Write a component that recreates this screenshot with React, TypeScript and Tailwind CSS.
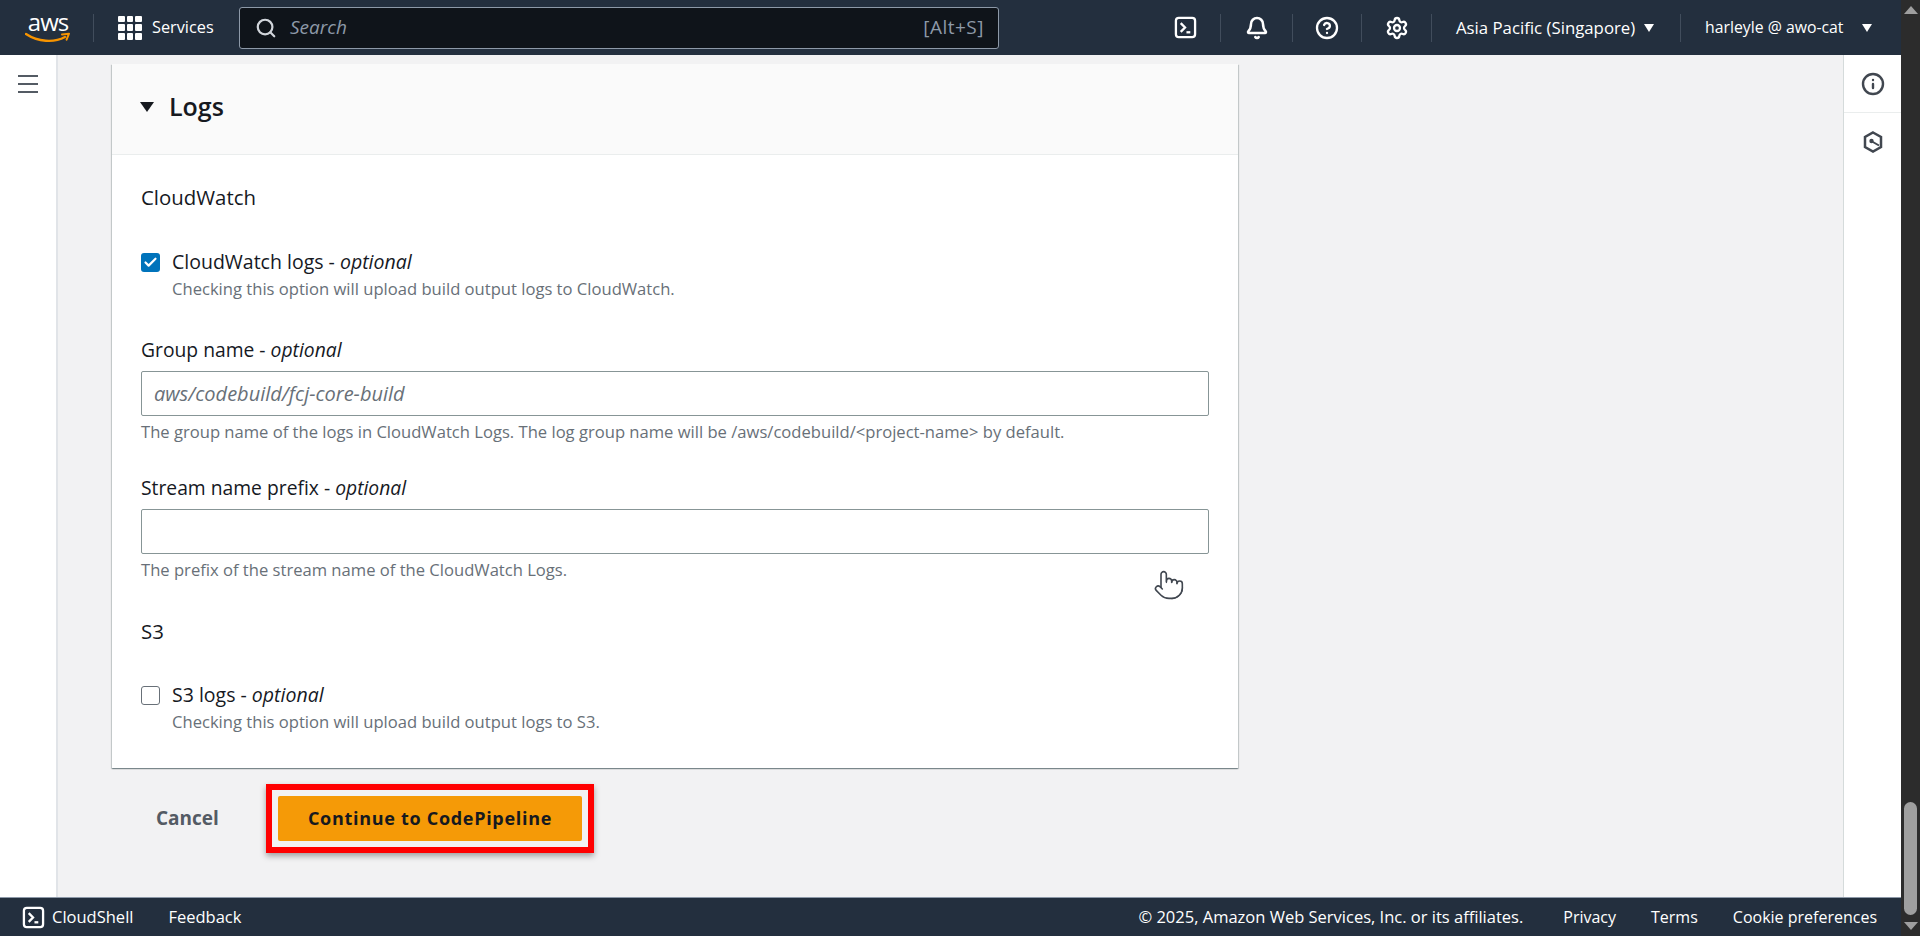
import { Bell, Check, CircleHelp, Info, Pointer, Search, Settings } from "lucide-react";

const FONT = "font-['Open_Sans','Noto_Sans',sans-serif]";

function ShellIcon({ className }: { className?: string }) {
  return (
    <svg viewBox="0 0 24 24" className={className} fill="none" stroke="currentColor">
      <rect x="2" y="2" width="20" height="20" rx="3" strokeWidth="2.4" />
      <path d="M7 7.5 11.5 12 7 16.5" strokeWidth="2.4" />
      <path d="M13 17h4" strokeWidth="2.4" />
    </svg>
  );
}

function Caret({ className }: { className?: string }) {
  return <span className={`inline-block h-0 w-0 border-x-[5px] border-t-[8px] border-x-transparent border-t-white ${className ?? ""}`} />;
}

function AwsLogo() {
  return (
    <div className="relative flex h-[40px] w-[46px] flex-col items-center">
      <span className="text-[24px] leading-[28px] tracking-[-1px] text-white">aws</span>
      <svg viewBox="0 0 46 12" className="absolute left-0 top-[24px] h-[12px] w-[46px]" fill="none">
        <path d="M1 2c12 8 28 9 39 3" stroke="#f79400" strokeWidth="2.4" strokeLinecap="round" />
        <path d="M37 2.5l7-.8-2.4 6" stroke="#f79400" strokeWidth="2" strokeLinecap="round" strokeLinejoin="round" />
      </svg>
    </div>
  );
}

function Divider() {
  return <span className="block h-[28px] w-px bg-[#414d5c]" />;
}

function TopBar() {
  return (
    <header className="flex h-[55px] shrink-0 items-center bg-[#232f3e] text-white shadow-[0_1px_0_#8d99a8]">
      <div className="ml-[25px] flex w-[46px] justify-center">
        <AwsLogo />
      </div>
      <span className="ml-[22px]"><Divider /></span>
      <div className="ml-[24px] grid h-[24px] w-[24px] grid-cols-3 gap-[2px]">
        {Array.from({ length: 9 }).map((_, i) => (
          <span key={i} className="rounded-[1px] bg-white" />
        ))}
      </div>
      <span className="ml-[10px] w-[63px] whitespace-nowrap text-[16.3px]">Services</span>
      <div className="ml-[24px] flex h-[42px] w-[760px] items-center rounded-[3px] border border-[#8d99a8] bg-[#0f141a]">
        <Search size={22} strokeWidth={2.4} className="ml-[15px] text-[#d1d5db]" />
        <span className="ml-[13px] text-[19px] italic text-[#8d99a8]">Search</span>
        <span className="ml-auto mr-[14px] text-[19px] tracking-[0.5px] text-[#8d99a8]">[Alt+S]</span>
      </div>
      <div className="ml-auto flex items-center">
        <span className="flex w-[70px] justify-center"><ShellIcon className="h-[23px] w-[23px]" /></span>
        <Divider />
        <span className="flex w-[71px] justify-center"><Bell size={24} strokeWidth={2.5} /></span>
        <Divider />
        <span className="flex w-[68px] justify-center"><CircleHelp size={24} strokeWidth={2.3} /></span>
        <Divider />
        <span className="flex w-[69px] justify-center"><Settings size={24} strokeWidth={2.3} /></span>
        <Divider />
        <span className="ml-[24px] w-[180px] whitespace-nowrap text-[16.8px]">Asia Pacific (Singapore)</span>
        <Caret className="ml-[8px]" />
        <span className="ml-[26px]"><Divider /></span>
        <span className="ml-[24px] w-[136px] whitespace-nowrap text-[15.8px]">harleyle @ awo-cat</span>
        <Caret className="ml-[21px] mr-[29px]" />
      </div>
    </header>
  );
}

function Footer() {
  return (
    <footer className="flex h-[39px] shrink-0 items-center border-t border-[#8d99a8] bg-[#232f3e] text-[16.5px] font-medium text-white">
      <ShellIcon className="ml-[22px] h-[23px] w-[23px]" />
      <span className="ml-[7px]">CloudShell</span>
      <span className="ml-[35px]">Feedback</span>
      <span className="ml-auto">© 2025, Amazon Web Services, Inc. or its affiliates.</span>
      <span className="ml-[40px] text-[16px]">Privacy</span>
      <span className="ml-[35px] text-[16px]">Terms</span>
      <span className="ml-[35px] mr-[24px] text-[16px]">Cookie preferences</span>
    </footer>
  );
}

function CheckOption({ label, desc, checked }: { label: string; desc: string; checked?: boolean }) {
  return (
    <div className="flex">
      {checked ? (
        <span className="mt-[4px] flex h-[19px] w-[19px] items-center justify-center rounded-[3px] bg-[#0073bb] text-white">
          <Check size={15} strokeWidth={3.5} />
        </span>
      ) : (
        <span className="mt-[4px] h-[19px] w-[19px] rounded-[3px] border border-[#687078] bg-white" />
      )}
      <div className="ml-[12px]">
        <div className="text-[19.5px] leading-[26px] text-[#16191f]">
          {label} - <i>optional</i>
        </div>
        <div className="mt-[3px] text-[16.6px] leading-[22px] text-[#687078]">{desc}</div>
      </div>
    </div>
  );
}

function Field({ label, placeholder, help }: { label: string; placeholder?: string; help: string }) {
  return (
    <div>
      <div className="text-[19.3px] leading-[26px] text-[#16191f]">
        {label} - <i>optional</i>
      </div>
      <div className="mt-[8px] flex h-[45px] items-center rounded-[2px] border border-[#879596] bg-white px-[12px] text-[20px] italic text-[#687078]">
        {placeholder}
      </div>
      <div className="mt-[5px] text-[16.6px] leading-[22px] text-[#687078]">{help}</div>
    </div>
  );
}

function LogsCard() {
  return (
    <section className="w-[1126px] bg-white shadow-[0_1px_1px_0_rgba(0,28,36,0.3),1px_1px_1px_0_rgba(0,28,36,0.15),-1px_1px_1px_0_rgba(0,28,36,0.15)]">
      <div className="flex h-[91px] items-center border-b border-[#eaeded] bg-[#fafafa] pb-[4px] pl-[28px]">
        <span className="h-0 w-0 border-x-[7px] border-t-[10px] border-x-transparent border-t-[#16191f]" />
        <h2 className="ml-[15px] text-[25px] font-semibold text-[#16191f]">Logs</h2>
      </div>
      <div className="flex flex-col px-[29px] pb-[35px] pt-[29px]">
        <div className="text-[20.4px] leading-[26px] text-[#16191f]">CloudWatch</div>
        <div className="mt-[39px]">
          <CheckOption checked label="CloudWatch logs" desc="Checking this option will upload build output logs to CloudWatch." />
        </div>
        <div className="mt-[37px]">
          <Field
            label="Group name"
            placeholder="aws/codebuild/fcj-core-build"
            help="The group name of the logs in CloudWatch Logs. The log group name will be /aws/codebuild/<project-name> by default."
          />
        </div>
        <div className="mt-[32px]">
          <Field label="Stream name prefix" help="The prefix of the stream name of the CloudWatch Logs." />
        </div>
        <div className="mt-[37px] text-[20.4px] leading-[26px] text-[#16191f]">S3</div>
        <div className="mt-[38px]">
          <CheckOption label="S3 logs" desc="Checking this option will upload build output logs to S3." />
        </div>
      </div>
    </section>
  );
}

export default function App() {
  return (
    <div className={`flex h-screen w-full overflow-hidden bg-[#2c2c2c] ${FONT}`}>
      <div className="flex min-w-0 flex-1 flex-col">
        <TopBar />
        <div className="flex min-h-0 flex-1">
          <nav className="flex w-[58px] shrink-0 justify-center border-r-2 border-[#e1e4e8] bg-white pt-[20px]">
            <div className="flex h-[18px] w-[20px] flex-col justify-between">
              <span className="h-[2px] bg-[#545b64]" />
              <span className="h-[2px] bg-[#545b64]" />
              <span className="h-[2px] bg-[#545b64]" />
            </div>
          </nav>
          <main className="relative min-w-0 flex-1 bg-[#f2f2f3] pl-[54px] pt-[9px]">
            <LogsCard />
            <div className="mt-[16px] flex items-center">
              <span className="ml-[44px] w-[110px] text-[19px] font-bold text-[#545b64]">Cancel</span>
              <div className="border-[6px] border-[#ff0000] p-[6px] shadow-[0_3px_6px_rgba(0,0,0,0.35)]">
                <div className="flex h-[45px] w-[304px] items-center justify-center rounded-[2px] bg-[#f59a07] text-[18px] font-bold tracking-[0.7px] text-[#16191f]">
                  Continue to CodePipeline
                </div>
              </div>
            </div>
            {/* mouse cursor captured in the recording */}
            <Pointer size={32} strokeWidth={1.2} className="absolute left-[1095px] top-[514px] fill-white text-[#414750]" />
          </main>
          <aside className="flex w-[58px] shrink-0 flex-col border-l border-[#d5dbdb] bg-white">
            <div className="flex h-[58px] items-center justify-center border-b border-[#eaeded] text-[#414750]">
              <Info size={24} strokeWidth={2.4} />
            </div>
            <div className="flex h-[58px] items-center justify-center text-[#414750]">
              <svg viewBox="0 0 24 24" className="h-[24px] w-[24px]" fill="none" stroke="currentColor" strokeWidth="2.5">
                <path d="M12 2.5 20 7v10l-8 4.5L4 17V7z" />
                <circle cx="10.5" cy="11" r="2.2" fill="currentColor" stroke="none" />
                <path d="M11 11.5l7 4" strokeWidth="2" />
              </svg>
            </div>
          </aside>
        </div>
        <Footer />
      </div>
      <div className="flex w-[19px] shrink-0 flex-col items-center bg-[#2c2c2c]">
        <span className="mt-[6px] h-0 w-0 border-x-[7px] border-b-[8px] border-x-transparent border-b-[#9f9f9f]" />
        <span className="mt-[788px] h-[113px] w-[13px] rounded-full bg-[#9f9f9f]" />
        <span className="mt-[7px] h-0 w-0 border-x-[7px] border-t-[8px] border-x-transparent border-t-[#9f9f9f]" />
      </div>
    </div>
  );
}
